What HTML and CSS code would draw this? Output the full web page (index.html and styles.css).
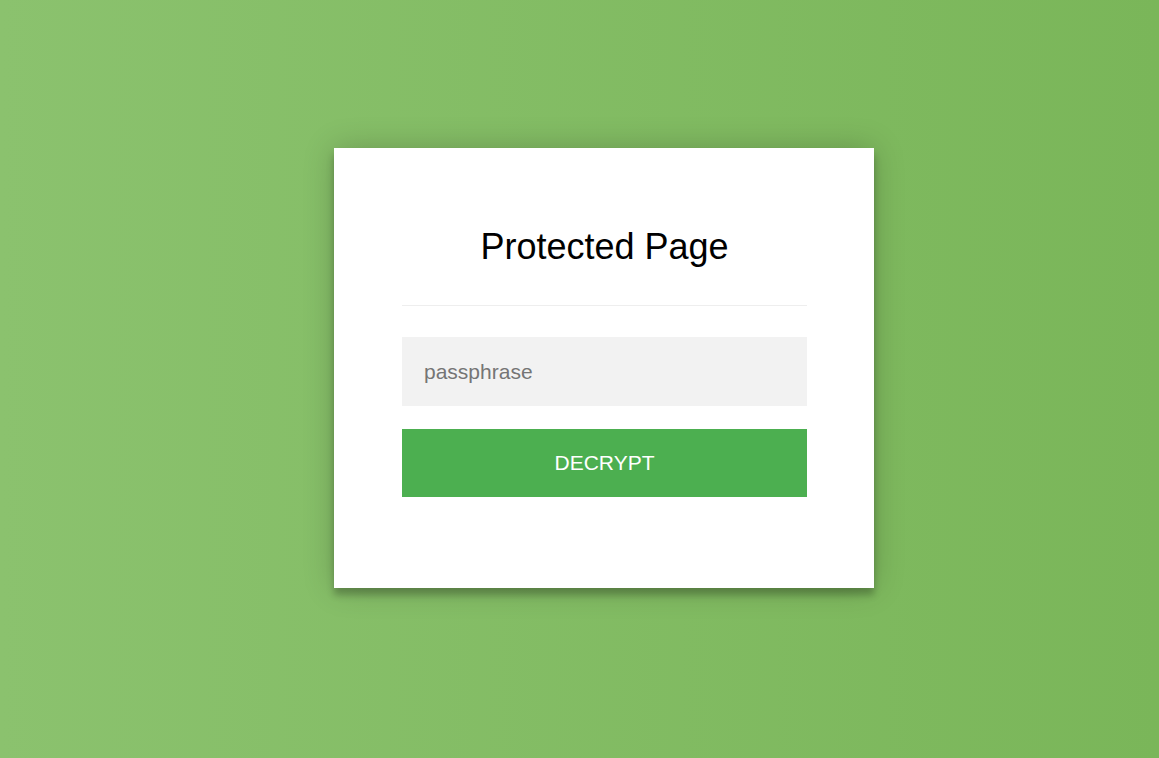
FILE: index.html
```html
<!doctype html>
<html lang="en">
  <head>
    <meta charset="UTF-8" />
    <title>Protected Page</title>
    <link rel="stylesheet" href="styles.css">
  </head>
  <body>
    <div class="page">
      <div class="form">
        <h4 class="title">Protected Page</h4>
        <hr class="divider" />
        <form class="decrypt-form">
          <input type="password" placeholder="passphrase" />
          <button type="button" class="decrypt-button">Decrypt</button>
        </form>
      </div>
    </div>
  </body>
</html>
```

FILE: styles.css
```css
html,
body {
  margin: 0;
  height: 100%;
}

body {
  background: #7ab659;
  background: linear-gradient(to left, #7ab659, #8bc26e);
  font-family: 'Liberation Sans', Arial, sans-serif;
  -webkit-font-smoothing: antialiased;
}

.page {
  padding: 148px 0 0 334px;
}

.form {
  width: 540px;
  box-sizing: border-box;
  background: #fff;
  padding: 68px 67px 91px 68px;
  text-align: center;
  box-shadow: 0 0 30px 0 rgba(0, 0, 0, 0.2), 0 7px 7px 0 rgba(0, 0, 0, 0.24);
}

.title {
  font-size: 36px;
  font-weight: normal;
  color: #000;
  margin: 10px 0 0;
  line-height: 41px;
}

.divider {
  margin: 38px 0 31px;
  border: 0;
  border-top: 1px solid #eee;
}

.decrypt-form {
  margin: 0;
}

.decrypt-form input {
  display: block;
  outline: 0;
  background: #f2f2f2;
  width: 100%;
  height: 69px;
  border: 0;
  margin: 0 0 23px;
  padding: 0 22px;
  box-sizing: border-box;
  font-family: inherit;
  font-size: 21px;
}

.decrypt-form input::placeholder {
  color: #757575;
}

.decrypt-button {
  display: block;
  text-transform: uppercase;
  outline: 0;
  background: #4caf50;
  width: 100%;
  height: 68px;
  border: 0;
  padding: 0;
  color: #fff;
  font-family: inherit;
  font-size: 21px;
  cursor: pointer;
}
```
